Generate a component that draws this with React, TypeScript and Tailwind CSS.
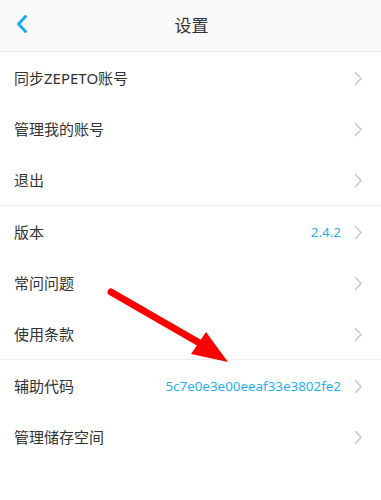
import React from 'react';

type Row = { label: string; value?: string };

const groups: Row[][] = [
  [{ label: '同步ZEPETO账号' }, { label: '管理我的账号' }, { label: '退出' }],
  [{ label: '版本', value: '2.4.2' }, { label: '常问问题' }, { label: '使用条款' }],
  [{ label: '辅助代码', value: '5c7e0e3e00eeaf33e3802fe2' }, { label: '管理储存空间' }],
];

const Chevron = () => (
  <svg width="9" height="15" viewBox="0 0 9 15" fill="none">
    <path d="M1.5 1.5 L7 7.5 L1.5 13.5" stroke="#c5cad1" strokeWidth="1.6" strokeLinecap="round" strokeLinejoin="round" />
  </svg>
);

const SettingRow = ({ row }: { row: Row }) => (
  <div className="flex h-[51px] items-center pl-[14px] pr-[18px] pt-[2px]">
    <span className="flex-1 text-[15px] text-[#333333]">{row.label}</span>
    {row.value && <span className="mr-[13px] text-[13.4px] text-[#1fb1f0]">{row.value}</span>}
    <Chevron />
  </div>
);

const App: React.FC = () => {
  return (
    <div
      className="relative h-[500px] w-[381px] overflow-hidden bg-white"
      style={{ fontFamily: '"Noto Sans", "Noto Sans CJK SC", sans-serif' }}
    >
      {/* header */}
      <header className="relative flex h-[52px] items-center justify-center border-b border-[#ececec] bg-[#fafafa]">
        <button className="absolute left-[15px] top-[14px]">
          <svg width="14" height="20" viewBox="0 0 14 20" fill="none">
            <path d="M10.5 2.5 L3.5 10 L10.5 17.5" stroke="#18aef0" strokeWidth="3" strokeLinecap="round" strokeLinejoin="round" />
          </svg>
        </button>
        <h1 className="pl-[2px] text-[17px] text-[#333333]">设置</h1>
      </header>

      {groups.map((g, i) => (
        <div key={i} className={i < groups.length - 1 ? 'border-b border-[#ececf0]' : ''}>
          {g.map((r) => (
            <SettingRow key={r.label} row={r} />
          ))}
        </div>
      ))}

      {/* red annotation arrow */}
      <svg className="pointer-events-none absolute left-0 top-0" width="381" height="500" viewBox="0 0 381 500">
        <line x1="111" y1="292" x2="203" y2="345" stroke="#ff0000" strokeWidth="7" strokeLinecap="round" />
        <polygon points="228,362 191,354 206,332" fill="#ff0000" />
      </svg>
    </div>
  );
};

export default App;
